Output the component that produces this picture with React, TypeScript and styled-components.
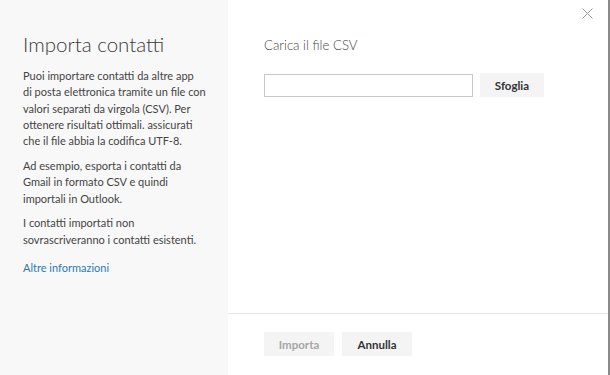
import React from 'react';
import styled, { createGlobalStyle } from 'styled-components';

const GlobalStyle = createGlobalStyle`
  html, body {
    margin: 0;
    padding: 0;
    background: #ffffff;
  }
  body {
    font-family: Lato, "Open Sans", sans-serif;
  }
`;

interface ActionBtnProps {
  $disabled?: boolean;
}

const App = () => {
  return (
    <>
      <GlobalStyle />
      <Dialog>
        <SidePanel>
          <Title>Importa contatti</Title>
          <Paragraph>
            Puoi importare contatti da altre app<br />
            di posta elettronica tramite un file con<br />
            valori separati da virgola (CSV). Per<br />
            ottenere risultati ottimali. assicurati<br />
            che il file abbia la codifica UTF-8.
          </Paragraph>
          <Paragraph>
            Ad esempio, esporta i contatti da<br />
            Gmail in formato CSV e quindi<br />
            importali in Outlook.
          </Paragraph>
          <Paragraph>
            I contatti importati non<br />
            sovrascriveranno i contatti esistenti.
          </Paragraph>
          <MoreLink href="#">Altre informazioni</MoreLink>
        </SidePanel>
        <MainPanel>
          <CloseBtn aria-label="Chiudi">
            <svg width="11" height="11" viewBox="0 0 11 11">
              <path d="M0.5 0.5 L10.5 10.5 M10.5 0.5 L0.5 10.5" stroke="#9a9a9a" strokeWidth="1" />
            </svg>
          </CloseBtn>
          <Content>
            <SectionTitle>Carica il file CSV</SectionTitle>
            <FileRow>
              <FileInput type="text" readOnly />
              <BrowseBtn>Sfoglia</BrowseBtn>
            </FileRow>
          </Content>
          <Footer>
            <ActionBtn $disabled>Importa</ActionBtn>
            <ActionBtn>Annulla</ActionBtn>
          </Footer>
        </MainPanel>
      </Dialog>
    </>
  );
};

const Dialog = styled.div`
  width: 610px;
  height: 375px;
  display: flex;
  box-sizing: border-box;
  border-right: 2px solid #8a8a8a;
  overflow: hidden;
`;

const SidePanel = styled.div`
  width: 228px;
  flex-shrink: 0;
  box-sizing: border-box;
  background: #f8f8f8;
  padding: 30px 4px 0 23px;
  color: #444;
`;

const Title = styled.h1`
  margin: 0 0 10px;
  font-size: 20.5px;
  font-weight: 300;
  line-height: 28px;
  color: #3a3a3a;
`;

const Paragraph = styled.p`
  margin: 0 0 8.5px;
  font-size: 11px;
  line-height: 16.3px;
  white-space: nowrap;
  color: #444;
`;

const MoreLink = styled.a`
  display: inline-block;
  margin-top: 5px;
  font-size: 11px;
  color: #2a7ab8;
  text-decoration: none;
`;

const MainPanel = styled.div`
  flex: 1;
  position: relative;
  display: flex;
  flex-direction: column;
  background: #fff;
`;

const CloseBtn = styled.button`
  position: absolute;
  top: 8px;
  right: 15px;
  width: 11px;
  height: 11px;
  padding: 0;
  border: none;
  background: none;
  display: flex;
`;

const Content = styled.div`
  flex: 1;
  padding: 35px 0 0 36px;
`;

const SectionTitle = styled.h2`
  margin: 0 0 18px;
  font-size: 13.2px;
  font-weight: 300;
  line-height: 20px;
  color: #444;
`;

const FileRow = styled.div`
  display: flex;
  align-items: center;
  gap: 7px;
`;

const FileInput = styled.input`
  width: 209px;
  height: 23px;
  box-sizing: border-box;
  border: 1px solid #c8c8c8;
  outline: none;
  padding: 0 6px;
  font-family: inherit;
`;

const BrowseBtn = styled.button`
  width: 64px;
  height: 24px;
  border: none;
  background: #f4f4f4;
  font-family: inherit;
  font-size: 11.5px;
  font-weight: 700;
  color: #333;
`;

const Footer = styled.div`
  height: 62px;
  border-top: 1px solid #e6e6e6;
  display: flex;
  align-items: flex-start;
  gap: 8px;
  padding: 18px 0 0 36px;
  box-sizing: border-box;
`;

const ActionBtn = styled('button')<ActionBtnProps>`
  width: 70px;
  height: 24px;
  border: none;
  background: #f4f4f4;
  font-family: inherit;
  font-size: 11.5px;
  font-weight: 700;
  color: ${(props) => (props.$disabled ? '#a6a6a6' : '#333')};
`;

export default App;
